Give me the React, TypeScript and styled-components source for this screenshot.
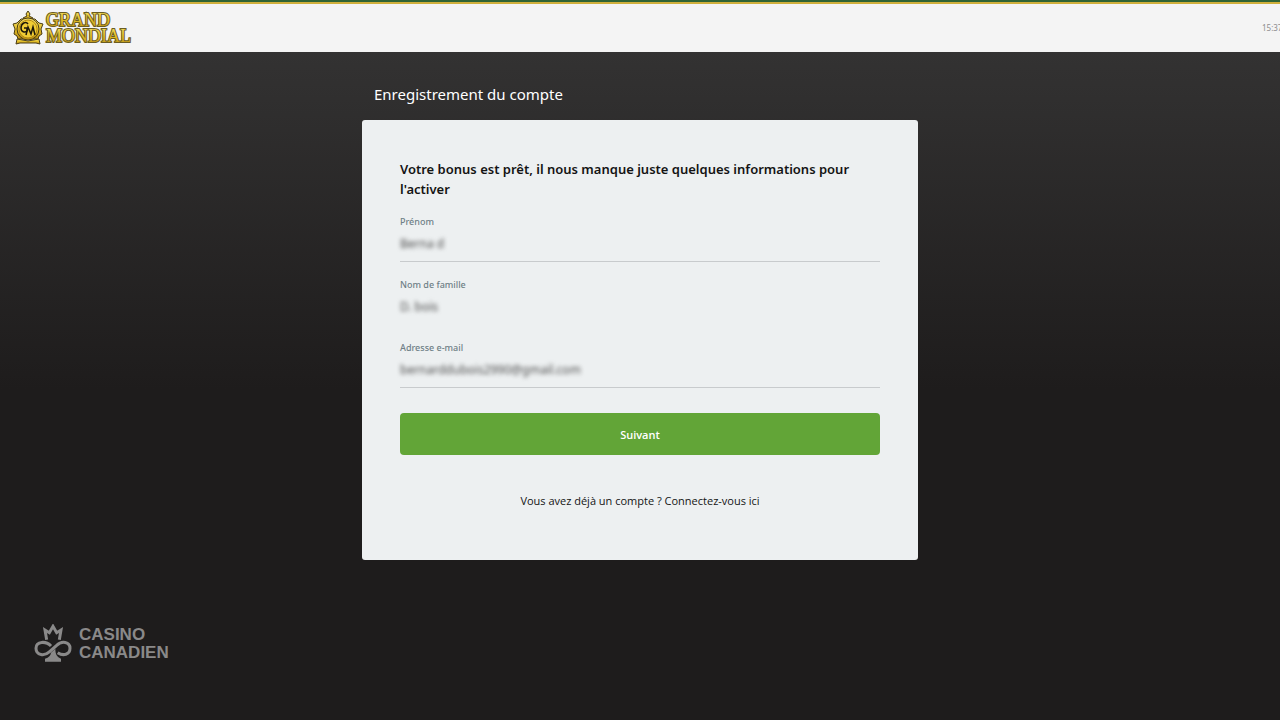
import React from "react";
import styled, { createGlobalStyle } from "styled-components";

const GlobalStyle = createGlobalStyle`
  *, *::before, *::after { box-sizing: border-box; }
  body {
    margin: 0;
    background: #1e1c1c;
    font-family: "Noto Sans", "Open Sans", sans-serif;
    color: #141414;
  }
`;

const Page = styled.div`
  min-height: 100vh;
  display: flex;
  flex-direction: column;
  background: linear-gradient(to bottom, #333232 52px, #1e1c1c 390px);
`;

const Header = styled.header`
  height: 52px;
  display: flex;
  align-items: center;
  justify-content: space-between;
  padding-left: 12px;
  border-top: 2px solid #2f6335;
  background: #f4f4f4;
  box-shadow: inset 0 2px 0 #d0b03c;
`;

const BrandLink = styled.a`
  display: flex;
  padding-top: 3px;
`;

const Clock = styled.time`
  width: 18px;
  padding-top: 2px;
  overflow: hidden;
  white-space: nowrap;
  font-size: 8px;
  line-height: 12px;
  color: #8d8d8d;
`;

const Main = styled.main`
  width: 100%;
  max-width: 556px;
  margin: 0 auto;
  padding-top: 30px;
`;

const PageTitle = styled.h1`
  margin: 0;
  padding: 0 12px 14px;
  font-size: 15px;
  line-height: 24px;
  font-weight: 400;
  color: #fff;
`;

const Card = styled.form`
  padding: 39px 38px 49px;
  border-radius: 3px;
  background: #edf0f1;
`;

const Lead = styled.h2`
  margin: 0 0 14px;
  font-size: 13px;
  line-height: 20px;
  font-weight: 600;
`;

const Field = styled.div<{ $underlined: boolean }>`
  display: flex;
  flex-direction: column;
  height: 49px;
  margin-bottom: 14px;
  border-bottom: 1px solid ${(p) => (p.$underlined ? "#c8cbcd" : "transparent")};
`;

const Label = styled.label`
  font-size: 9px;
  line-height: 18px;
  font-weight: 500;
  color: #6f8087;
`;

const Input = styled.input`
  width: 100%;
  height: 24px;
  padding: 0;
  border: 0;
  outline: 0;
  background: transparent;
  font-family: inherit;
  font-size: 12px;
  color: #4c4c4c;
  filter: blur(2px);
`;

const Submit = styled.button`
  width: 100%;
  height: 42px;
  margin-top: 11px;
  border: 0;
  border-radius: 4px;
  background: #62a537;
  font-family: "Open Sans", sans-serif;
  font-size: 11px;
  font-weight: 600;
  color: #fff;
`;

const Login = styled.p`
  margin: 36px 0 0;
  text-align: center;
  font-family: "Open Sans", sans-serif;
  font-size: 11px;
  line-height: 20px;
`;

const LoginLink = styled.a`
  color: inherit;
  text-decoration: none;
`;

const Footer = styled.footer`
  display: flex;
  align-items: flex-end;
  gap: 7px;
  padding: 64px 34px 56px;
  color: #8a8989;
`;

const FooterName = styled.div`
  font-family: "Liberation Sans", Arial, sans-serif;
  font-size: 17px;
  line-height: 18px;
  font-weight: 700;
`;

function GrandMondialLogo() {
  return (
    <svg width="124" height="36" viewBox="0 0 124 36" role="img" aria-label="Grand Mondial">
      <defs>
        <linearGradient id="gold" x1="0" y1="0" x2="0" y2="1">
          <stop offset="0" stopColor="#f7e36a" />
          <stop offset="0.5" stopColor="#e2bd28" />
          <stop offset="1" stopColor="#b98d12" />
        </linearGradient>
      </defs>
      <g stroke="#4a3d14" strokeWidth="1" fill="url(#gold)" strokeLinejoin="round">
        <path d="M16 0l2 3-1 2 4 2-2 3h-6l-2-3 4-2-1-2z" />
        <path d="M9 8L5 12 1 13l2 5-1 5 3 2 1 3h20l1-3 3-2-1-5 2-5-4-1-4-4z" />
        <circle cx="16" cy="18" r="11" />
        <circle cx="16" cy="18" r="9" fill="#f0cc34" stroke="#b58a15" />
        <path d="M5 28l11 2 11-2 1 5-4-1H8l-4 1z" />
      </g>
      <g fill="none" stroke="#1d180a" strokeWidth="1.500">
        <path d="M16 13c-2-3-7-1-7 4 0 4 4 5 6 3v-3h-3" />
        <path d="M14 24l2-8 3 7 2-7 2 8" />
      </g>
      <g
        fontFamily="Liberation Serif, serif"
        fontSize="18"
        fontWeight="400"
        fill="url(#gold)"
        stroke="#6b5d22"
        strokeWidth="2"
        paintOrder="stroke"
      >
        <text x="34" y="15">GRAND</text>
        <text x="34" y="31">MONDIAL</text>
      </g>
    </svg>
  );
}

function MapleClubIcon() {
  return (
    <svg width="38" height="38" viewBox="42 40 114 114" aria-hidden="true">
      <g fill="none" stroke="currentColor" strokeWidth="9">
        <path d="M80 87L75 58l13 8 11-19 11 19 13-8-5 29" />
        <path d="M93 106C79 91 48 90 48 113c0 22 26 24 41 10l21-19c15-15 40-11 40 9 0 19-20 24-37 13" />
      </g>
      <path d="M93 126l13-12c0 17 5 25 17 30v9H75v-9c12-4 17-10 18-18z" fill="currentColor" />
    </svg>
  );
}

const fields = [
  { id: "firstName", label: "Prénom", type: "text", value: "Berna d", underlined: true },
  { id: "lastName", label: "Nom de famille", type: "text", value: "D. bois", underlined: false },
  { id: "email", label: "Adresse e-mail", type: "email", value: "bernarddubois2990@gmail.com", underlined: true },
];

export default function App() {
  return (
    <>
      <GlobalStyle />
      <Page>
        <Header>
          <BrandLink href="#">
            <GrandMondialLogo />
          </BrandLink>
          <Clock>15:37</Clock>
        </Header>
        <Main>
          <PageTitle>Enregistrement du compte</PageTitle>
          <Card>
            <Lead>Votre bonus est prêt, il nous manque juste quelques informations pour l'activer</Lead>
            {fields.map((f) => (
              <Field key={f.id} $underlined={f.underlined}>
                <Label htmlFor={f.id}>{f.label}</Label>
                <Input id={f.id} type={f.type} defaultValue={f.value} />
              </Field>
            ))}
            <Submit type="button">Suivant</Submit>
            <Login>
              Vous avez déjà un compte ? <LoginLink href="#">Connectez-vous ici</LoginLink>
            </Login>
          </Card>
        </Main>
        <Footer>
          <MapleClubIcon />
          <FooterName>
            CASINO
            <br />
            CANADIEN
          </FooterName>
        </Footer>
      </Page>
    </>
  );
}
